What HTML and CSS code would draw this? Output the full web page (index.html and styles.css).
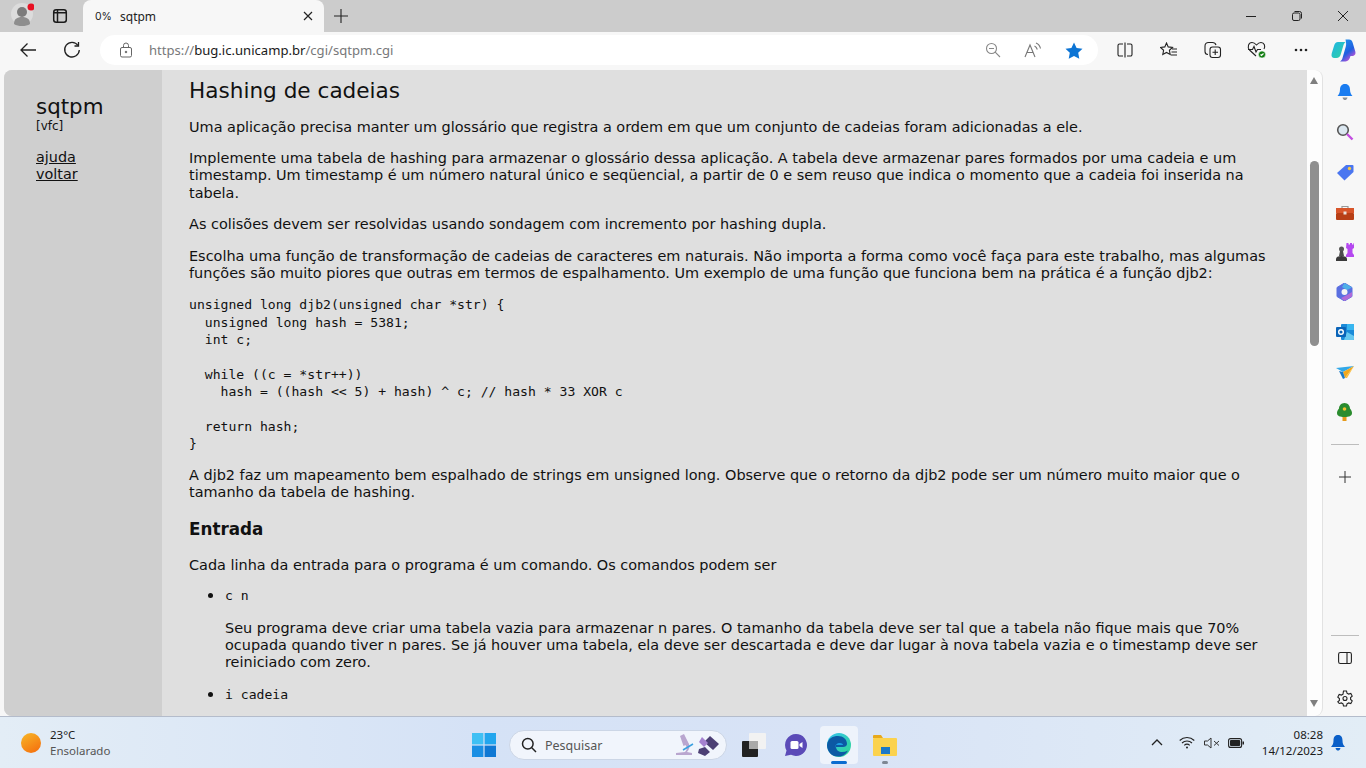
FILE: index.html
```html
<!DOCTYPE html>
<html lang="pt-BR">

<head>
  <meta charset="UTF-8">
  <meta name="viewport" content="width=device-width, initial-scale=1.0">
  <title>0% sqtpm</title>
  <link rel="stylesheet" href="styles.css">
</head>

<body>
  <div class="screen">

    <!-- Tab strip -->
    <div class="tabstrip">
      <div class="profile">
        <svg width="34" height="30" viewBox="0 0 34 30">
          <circle cx="22" cy="15" r="11" fill="#dcdcdc" />
          <circle cx="22" cy="13" r="5" fill="#7c7c7c" />
          <path d="M14 25c0-5 3-7 8-7s8 2 8 7c-2 1.500-5 2-8 2s-6-.5-8-2z" fill="#8e8e8e" />
          <circle cx="31" cy="8" r="3.500" fill="#e81123" />
        </svg>
      </div>
      <svg class="tabs-icon" width="16" height="16" viewBox="0 0 16 16" fill="none" stroke="#1a1a1a" stroke-width="1.500">
        <rect x="1.700" y="1.700" width="12.600" height="12.600" rx="2.500" />
        <path d="M5.500 2v12.300M2 4.800h12" />
      </svg>
      <div class="tab">
        <span class="tab-fav">0%</span>
        <span class="tab-title">sqtpm</span>
        <svg width="12" height="12" viewBox="0 0 12 12" stroke="#222" stroke-width="1.200">
          <path d="M2 2l8 8M10 2l-8 8" />
        </svg>
      </div>
      <svg class="new-tab" width="16" height="16" viewBox="0 0 16 16" stroke="#222" stroke-width="1.100">
        <path d="M8 1v14M1 8h14" />
      </svg>
      <div class="win-buttons">
        <svg width="12" height="12" viewBox="0 0 12 12" stroke="#222" stroke-width="1">
          <path d="M1 6.500h10" />
        </svg>
        <svg width="12" height="12" viewBox="0 0 12 12" fill="none" stroke="#222" stroke-width="1">
          <rect x="1.500" y="3" width="7.500" height="7.500" rx="1.500" />
          <path d="M3.500 1.500h5a2 2 0 0 1 2 2v5" />
        </svg>
        <svg width="12" height="12" viewBox="0 0 12 12" stroke="#222" stroke-width="1">
          <path d="M1 1l10 10M11 1L1 11" />
        </svg>
      </div>
    </div>

    <!-- Address bar -->
    <div class="toolbar">
      <svg class="nav-back" width="18" height="16" viewBox="0 0 18 16" fill="none" stroke="#222" stroke-width="1.300">
        <path d="M17 8H2M8.500 1.500L2 8l6.500 6.500" />
      </svg>
      <svg class="nav-reload" width="18" height="18" viewBox="0 0 18 18" fill="none" stroke="#222" stroke-width="1.300">
        <path d="M15 4.500A7.300 7.300 0 1 0 16.300 9" />
        <path d="M15.500 1v4h-4" />
      </svg>
      <div class="address">
        <svg class="lock" width="14" height="16" viewBox="0 0 14 16" fill="none" stroke="#666" stroke-width="1">
          <rect x="1.500" y="5.500" width="11" height="9.500" rx="1.500" />
          <path d="M4.500 5.500V3.500a2.500 2.500 0 0 1 5 0v2" />
          <circle cx="7" cy="10" r=".8" fill="#666" />
        </svg>
        <span class="url"><span class="url-dim">https://</span>bug.ic.unicamp.br<span class="url-dim">/cgi/sqtpm.cgi</span></span>
        <div class="address-icons">
          <svg width="16" height="16" viewBox="0 0 16 16" fill="none" stroke="#888" stroke-width="1.100">
            <circle cx="6.500" cy="6.500" r="5" />
            <path d="M10.200 10.200L15 15M4 6.500h5" />
          </svg>
          <svg width="18" height="16" viewBox="0 0 18 16" fill="none" stroke="#777" stroke-width="1.100">
            <path d="M1 15L6 3l5 12M3 10.500h6" />
            <path d="M10.500 4c1.500.7 2.300 1.800 2.800 3.500M12 1c2.500 1 4 3 4.500 5.500" />
          </svg>
          <svg width="18" height="17" viewBox="0 0 18 17">
            <path d="M9 .5l2.600 5.400 5.900.8-4.300 4.100 1.100 5.900L9 13.900l-5.300 2.800 1.100-5.900L.5 6.700l5.900-.8z" fill="#0c74d4" />
          </svg>
        </div>
      </div>
      <div class="toolbar-icons">
        <svg width="16" height="16" viewBox="0 0 16 16" fill="none" stroke="#222" stroke-width="1.100">
          <path d="M6 2H2.500A1.500 1.500 0 0 0 1 3.500v9A1.500 1.500 0 0 0 2.500 14H6M10 2h3.500A1.500 1.500 0 0 1 15 3.500v9a1.500 1.500 0 0 1-1.500 1.500H10M8 .5v15" />
        </svg>
        <svg width="18" height="16" viewBox="0 0 18 16" fill="none" stroke="#222" stroke-width="1.100">
          <path d="M6.500 1l1.700 3.900 4.300.5-3.100 2.900.8 4.200-3.700-2.100-3.700 2.100.8-4.200L.5 5.400l4.300-.5zM12 7h5M11.500 10h5.500M11 13h6" />
        </svg>
        <svg width="18" height="18" viewBox="0 0 18 18" fill="none" stroke="#222" stroke-width="1.100">
          <path d="M4 13.500c-2 0-3-1-3-3V5c0-2 1.500-3.500 3.500-3.500h4c2 0 3 1 3.500 2.500" />
          <rect x="6" y="6" width="10.500" height="10.500" rx="2.500" />
          <path d="M11.200 8.500v5.500M8.500 11.200h5.500" />
        </svg>
        <svg width="20" height="18" viewBox="0 0 20 18" fill="none" stroke="#222" stroke-width="1.100">
          <path d="M9 15L2.500 9C0 6 1.500 1.500 5 1.500c2 0 3.200 1 4.500 2.500 1.300-1.500 2.500-2.500 4.500-2.500 3.500 0 4.500 4 3 6.500" />
          <path d="M1 8.500h4.500l1.500-3 2 5.500 1.500-2.500H14" />
          <circle cx="15" cy="13.500" r="3.600" fill="#107c10" stroke="#fff" stroke-width=".6" />
          <path d="M13.500 13.500l1 1 2-2" stroke="#fff" />
        </svg>
        <svg width="14" height="4" viewBox="0 0 14 4" fill="#222">
          <circle cx="2" cy="2" r="1.300" />
          <circle cx="7" cy="2" r="1.300" />
          <circle cx="12" cy="2" r="1.300" />
        </svg>
      </div>
      <svg class="copilot" width="25" height="23" viewBox="0 0 25 23">
        <defs>
          <linearGradient id="copA" x1="0" y1="0" x2="1" y2="1">
            <stop offset="0" stop-color="#1fb4e6" />
            <stop offset="1" stop-color="#30d2a0" />
          </linearGradient>
          <linearGradient id="copB" x1="0" y1="0" x2=".6" y2="1">
            <stop offset="0" stop-color="#1d9af0" />
            <stop offset=".65" stop-color="#1f5fe0" />
            <stop offset="1" stop-color="#c452d8" />
          </linearGradient>
        </defs>
        <path d="M7 3h7.500c-1.200 1-1.800 2.200-2.300 4l-2.500 8.500c-.6 2-2 3.500-4.200 3.500H3.500C1 19 0 17 .7 14.500L3 7c.7-2.500 2-4 4-4z" fill="url(#copA)" />
        <path d="M14.500 .5h3.500c2 0 3 1 3.600 3l2.700 9c.7 2.800-.8 4.500-3.300 4.500h-1.500c-.8 3-2.500 5.500-5 5.500H9c1.500-1 2.300-2.500 2.800-4.500l3-10.500c.5-2 .5-2.500-.3-7z" fill="url(#copB)" />
      </svg>
    </div>

    <!-- Page, scrollbar, edge sidebar -->
    <div class="body-row">
      <div class="viewport">
        <aside class="side">
          <div class="side-title">sqtpm</div>
          <div class="side-user">[vfc]</div>
          <a class="side-link" href="#">ajuda</a>
          <a class="side-link" href="#">voltar</a>
        </aside>
        <main class="content">
          <h1>Hashing de cadeias</h1>
          <p>Uma aplicação precisa manter um glossário que registra a ordem em que um conjunto de cadeias foram adicionadas a ele.</p>
          <p>Implemente uma tabela de hashing para armazenar o glossário dessa aplicação. A tabela deve armazenar pares formados por uma cadeia e um timestamp. Um timestamp é um número natural único e seqüencial, a partir de 0 e sem reuso que indica o momento que a cadeia foi inserida na tabela.</p>
          <p>As colisões devem ser resolvidas usando sondagem com incremento por hashing dupla.</p>
          <p>Escolha uma função de transformação de cadeias de caracteres em naturais. Não importa a forma como você faça para este trabalho, mas algumas funções são muito piores que outras em termos de espalhamento. Um exemplo de uma função que funciona bem na prática é a função djb2:</p>
          <pre>unsigned long djb2(unsigned char *str) {
  unsigned long hash = 5381;
  int c;

  while ((c = *str++))
    hash = ((hash &lt;&lt; 5) + hash) ^ c; // hash * 33 XOR c

  return hash;
}</pre>
          <p>A djb2 faz um mapeamento bem espalhado de strings em unsigned long. Observe que o retorno da djb2 pode ser um número muito maior que o tamanho da tabela de hashing.</p>
          <h2>Entrada</h2>
          <p>Cada linha da entrada para o programa é um comando. Os comandos podem ser</p>
          <ul>
            <li>
              <code>c n</code>
              <p>Seu programa deve criar uma tabela vazia para armazenar n pares. O tamanho da tabela deve ser tal que a tabela não fique mais que 70% ocupada quando tiver n pares. Se já houver uma tabela, ela deve ser descartada e deve dar lugar à nova tabela vazia e o timestamp deve ser reiniciado com zero.</p>
            </li>
            <li>
              <code>i cadeia</code>
            </li>
          </ul>
        </main>
      </div>
      <div class="scrollbar">
        <span class="arrow-up"></span>
        <span class="thumb"></span>
        <span class="arrow-down"></span>
      </div>
      <div class="edge">
        <div class="edge-item">
          <svg width="16" height="18" viewBox="0 0 16 18">
            <path d="M8 1c3.500 0 5 2.500 5 5.500 0 3 1 5 2.500 6.500H.5C2 11.500 3 9.500 3 6.500 3 3.500 4.500 1 8 1z" fill="#1a7cf0" />
            <path d="M5.500 14.500h5C10 16.500 9 17 8 17s-2-.5-2.500-2.500z" fill="#8a8f98" />
          </svg>
        </div>
        <div class="edge-item">
          <svg width="18" height="18" viewBox="0 0 18 18" fill="none">
            <circle cx="7" cy="7" r="5.300" fill="#dbe7f0" stroke="#555" stroke-width="1.600" />
            <path d="M11 11l5.500 5.500" stroke="#c24de0" stroke-width="2.400" />
          </svg>
        </div>
        <div class="edge-item">
          <svg width="18" height="17" viewBox="0 0 18 17">
            <path d="M10 1h6.500A1 1 0 0 1 17.500 2v6L8.500 16.500 1 9z" fill="#4a76f0" />
            <circle cx="13.500" cy="4.500" r="1.700" fill="#f6c644" />
          </svg>
        </div>
        <div class="edge-item">
          <svg width="18" height="15" viewBox="0 0 18 15">
            <path d="M6 3V1.500h6V3" fill="none" stroke="#9a9a9a" stroke-width="1.200" />
            <rect y="3" width="18" height="5" fill="#d8552a" />
            <rect y="8" width="18" height="7" rx="1" fill="#b83f16" />
            <rect x="7.500" y="6.500" width="3" height="3" fill="#e9e2dc" />
          </svg>
        </div>
        <div class="edge-item">
          <svg width="18" height="18" viewBox="0 0 18 18">
            <path d="M10.500 0h2v1.500h1.500V0h2v1.500h1.500V0H18v5l-1.500 1v4l1.500 2v2H10v-2l1.500-2V6L10 5z" fill="#b548f0" />
            <circle cx="5.500" cy="6" r="2.500" fill="#555" />
            <path d="M4 8h3l1 5H3z" fill="#4d4d4d" />
            <path d="M0 18v-2c0-2 2-3 5.500-3s5.500 1 5.500 3v2z" fill="#3a3a3a" />
          </svg>
        </div>
        <div class="edge-item">
          <svg width="17" height="18" viewBox="0 0 17 18">
            <path d="M8.500 0L16 4.500v9L8.500 18 1 13.500v-9z" fill="#5a6fe0" stroke="#5a6fe0" stroke-linejoin="round" />
            <path d="M8.500 0L16 4.500 11 7 6 4z" fill="#4fb0e8" />
            <path d="M16 9v4.500L8.500 18 5 15l6-3z" fill="#b06ad8" />
            <circle cx="8.500" cy="9" r="3" fill="#f4f4f4" />
          </svg>
        </div>
        <div class="edge-item">
          <svg width="18" height="16" viewBox="0 0 18 16">
            <rect x="5" width="13" height="16" rx="1" fill="#1a8ad8" />
            <path d="M11 0h6a1 1 0 0 1 1 1v5h-7z" fill="#38b6f0" />
            <path d="M11 8l7 4v3a1 1 0 0 1-1 1h-9z" fill="#66c8f0" />
            <rect y="3" width="10" height="10" rx="1" fill="#0a64b8" />
            <circle cx="5" cy="8" r="2.300" fill="none" stroke="#fff" stroke-width="1.400" />
          </svg>
        </div>
        <div class="edge-item">
          <svg width="18" height="13" viewBox="0 0 18 13">
            <path d="M0 2l18-2-11 6z" fill="#32a8e8" />
            <path d="M18 0L7 6l2 6z" fill="#f2a81d" />
            <path d="M18 0L9 12l2 0z" fill="#fbbc3a" />
            <path d="M3 5l4 1 2 6-2 1z" fill="#1a7ac8" />
          </svg>
        </div>
        <div class="edge-item">
          <svg width="15" height="18" viewBox="0 0 15 18">
            <rect x="5.500" y="13" width="4" height="5" fill="#e69a1a" />
            <path d="M7.500 0C11 0 13 3 13 5.500 14.500 7 15 9 15 10c0 3-3 4-7.500 4S0 13 0 10c0-1 .5-3 2-4.500C2 3 4 0 7.500 0z" fill="#2a8c2e" />
            <circle cx="7.500" cy="6" r="1.800" fill="#f2c12e" />
          </svg>
        </div>
        <span class="edge-rule edge-rule-top"></span>
        <div class="edge-item">
          <svg width="14" height="14" viewBox="0 0 14 14" stroke="#333" stroke-width="1">
            <path d="M7 1v12M1 7h12" />
          </svg>
        </div>
        <span class="edge-spacer"></span>
        <span class="edge-rule"></span>
        <div class="edge-item edge-item-low">
          <svg width="14" height="14" viewBox="0 0 14 14" fill="none" stroke="#222" stroke-width="1.100">
            <rect x=".6" y="1.500" width="12.800" height="11" rx="1.800" />
            <path d="M9 1.500v11" />
          </svg>
        </div>
        <div class="edge-item edge-item-low">
          <svg width="16" height="17" viewBox="0 0 16 17" fill="none" stroke="#222" stroke-width="1.100">
            <path d="M6.500 1h3l.5 2.200 1.600.9 2.200-.6 1.400 2.600-1.600 1.500v1.800l1.600 1.500-1.400 2.600-2.200-.6-1.600.9-.5 2.200h-3l-.5-2.200-1.600-.9-2.200.6L.8 11.900l1.600-1.500V8.600L.8 7.100l1.400-2.600 2.200.6L6 4.200z" />
            <circle cx="8" cy="8.500" r="2" />
          </svg>
        </div>
      </div>
    </div>

    <!-- Windows taskbar -->
    <footer class="taskbar">
      <div class="weather">
        <span class="sun"></span>
        <div class="weather-text">
          <span class="temp">23°C</span>
          <span class="cond">Ensolarado</span>
        </div>
      </div>
      <div class="task-center">
        <svg class="win-logo" width="24" height="24" viewBox="0 0 24 24">
          <rect width="11.400" height="11.400" x="0" y="0" fill="#3fc0f4" />
          <rect width="11.400" height="11.400" x="12.600" y="0" fill="#22a6ee" />
          <rect width="11.400" height="11.400" x="0" y="12.600" fill="#1a8fe4" />
          <rect width="11.400" height="11.400" x="12.600" y="12.600" fill="#0f78d4" />
        </svg>
        <div class="search">
          <svg width="16" height="16" viewBox="0 0 16 16" fill="none" stroke="#222" stroke-width="1.500">
            <circle cx="6.800" cy="6.800" r="5.300" />
            <path d="M10.800 10.800L15 15" />
          </svg>
          <span class="search-label">Pesquisar</span>
          <svg class="search-art" width="46" height="24" viewBox="0 0 46 24">
            <path d="M6 3l4-2 5 10c1 3 0 6-2 8l5 1v2H2v-2l9-1c1.500-1.500 2-3 1.500-5l-1-2-2 1z" fill="#b9a6cf" />
            <path d="M9 17l10-6" stroke="#3aa0e0" stroke-width="1.500" />
            <path d="M30 9l6-6 9 8-6 6zM25 16l6-2 5 5-5 4-7-3z" fill="#4c3f74" />
            <path d="M28 4l6 6-4 4-5-5z" fill="#a582cf" />
          </svg>
        </div>
        <svg class="task-icon" width="24" height="24" viewBox="0 0 24 24">
          <rect x="7" y="0" width="17" height="16" rx="1" fill="#f2f2f2" />
          <rect x="0" y="8" width="16" height="16" rx="1" fill="#222" />
          <rect x="7" y="8" width="9" height="8" fill="#a9a9a9" />
        </svg>
        <svg class="task-icon" width="24" height="24" viewBox="0 0 24 24">
          <path d="M12 1a11 11 0 1 1-5 20.800L1 23l1.500-5.500A11 11 0 0 1 12 1z" fill="#5b4bb8" />
          <rect x="6.500" y="8" width="8" height="8" rx="1.500" fill="#fff" />
          <path d="M15.500 11l3-2v6l-3-2z" fill="#fff" />
        </svg>
        <div class="task-active">
          <svg width="24" height="24" viewBox="0 0 24 24">
            <defs>
              <linearGradient id="edgeA" x1="0" y1="0" x2="1" y2="1">
                <stop offset="0" stop-color="#35c1f1" />
                <stop offset="1" stop-color="#2fd88e" />
              </linearGradient>
            </defs>
            <circle cx="12" cy="12" r="12" fill="url(#edgeA)" />
            <path d="M0 12C1 5 6 3 11 3c5 0 9 3 9 8 0 2-2 3-4 3H9c0 3 3 5 6 5 2 0 4-.5 6-1.500-2 3.500-5 6-9 6C5 24 0 19 0 12z" fill="#0c59a4" />
            <path d="M8 15c0-3 2-5 5-5 2 0 3 1 3 2H9z" fill="#1b9de2" />
          </svg>
          <span class="active-bar"></span>
        </div>
        <div class="task-folder">
          <svg width="24" height="22" viewBox="0 0 24 22">
            <path d="M0 2a1 1 0 0 1 1-1h7l2 3H0z" fill="#e8a91c" />
            <rect y="4" width="24" height="18" rx="1" fill="#fbd24e" />
            <rect x="8" y="13" width="9" height="7" fill="#1b78c8" />
          </svg>
          <span class="open-dot"></span>
        </div>
      </div>
      <div class="tray">
        <svg width="12" height="7" viewBox="0 0 12 7" fill="none" stroke="#222" stroke-width="1.300">
          <path d="M1 6l5-5 5 5" />
        </svg>
        <svg class="tray-wifi" width="16" height="13" viewBox="0 0 16 13" fill="none" stroke="#222" stroke-width="1.100">
          <path d="M.7 4.500a10.500 10.500 0 0 1 14.600 0M3 7a7.200 7.200 0 0 1 10 0M5.300 9.300a3.800 3.800 0 0 1 5.400 0" />
          <circle cx="8" cy="11.500" r="1" fill="#222" stroke="none" />
        </svg>
        <svg width="16" height="12" viewBox="0 0 16 12" fill="none" stroke="#333" stroke-width="1">
          <path d="M.5 4v4h3L7 11V1L3.500 4zM10 4l5 4.500M15 4l-5 4.500" />
        </svg>
        <svg class="tray-battery" width="16" height="10" viewBox="0 0 16 10">
          <rect x=".6" y=".6" width="13" height="8.800" rx="2" fill="none" stroke="#222" stroke-width="1.100" />
          <rect x="2" y="2" width="10.200" height="6" rx="1" fill="#222" />
          <rect x="14.500" y="3.500" width="1.500" height="3" fill="#222" />
        </svg>
        <div class="clock">
          <span>08:28</span>
          <span>14/12/2023</span>
        </div>
        <svg width="14" height="16" viewBox="0 0 14 16">
          <path d="M7 0c3.500 0 4.500 2.500 4.500 5.500 0 3 .8 4.500 2.500 6.500H0c1.700-2 2.500-3.500 2.500-6.500C2.500 2.500 3.500 0 7 0z" fill="#0a5fc8" />
          <path d="M4.500 13h5C9 15 8 15.500 7 15.500S5 15 4.500 13z" fill="#0a5fc8" />
        </svg>
      </div>
    </footer>
  </div>
</body>

</html>
```

FILE: styles.css
```css
/* General */
* {
  box-sizing: border-box;
}

body {
  margin: 0;
  overflow: hidden;
  font-family: 'Noto Sans', sans-serif;
}

.screen {
  width: 1366px;
  height: 768px;
  display: flex;
  flex-direction: column;
  overflow: hidden;
  background: #f7f7f7;
}

svg {
  flex: none;
}

/* Tab strip */
.tabstrip {
  height: 32px;
  flex: none;
  display: flex;
  align-items: center;
  background: #cccccc;
}

.profile {
  width: 36px;
  margin-right: 16px;
}

.tabs-icon {
  margin-right: 15px;
}

.tab {
  width: 241px;
  height: 32px;
  display: flex;
  align-items: center;
  padding: 0 10px 0 12px;
  background: #f7f7f7;
  border-radius: 8px 8px 0 0;
  font-family: 'Inter', sans-serif;
  font-size: 12px;
  color: #222;
}

.tab-fav {
  width: 25px;
  font-size: 10.500px;
}

.tab-title {
  flex: 1;
  font-family: 'Noto Sans', sans-serif;
}

.new-tab {
  margin-left: 9px;
}

.win-buttons {
  margin-left: auto;
  display: flex;
  gap: 34px;
  padding-right: 17px;
}

/* Address bar */
.toolbar {
  height: 38px;
  flex: none;
  display: flex;
  align-items: center;
  padding-bottom: 2px;
  background: #f7f7f7;
}

.nav-back {
  margin-left: 19px;
}

.nav-reload {
  margin-left: 26px;
}

.address {
  width: 998px;
  height: 30px;
  margin-left: 19px;
  padding: 0 15px 0 19px;
  display: flex;
  align-items: center;
  background: #ffffff;
  border-radius: 15px;
}

.url {
  margin-left: 16px;
  font-size: 13.100px;
  color: #1a1a1a;
}

.url-dim {
  color: #77787a;
}

.address-icons {
  margin-left: auto;
  display: flex;
  align-items: center;
  gap: 23px;
}

.toolbar-icons {
  margin-left: 5px;
  display: grid;
  grid-auto-flow: column;
  grid-auto-columns: 44px;
  justify-items: center;
  align-items: center;
}

.copilot {
  margin-left: 8px;
}

/* Page area */
.body-row {
  height: 646px;
  flex: none;
  display: flex;
  padding-left: 4px;
  background: #f7f7f7;
}

.viewport {
  width: 1303px;
  display: flex;
  overflow: hidden;
  background: #dfdfdf;
  border-radius: 8px 0 0 8px;
}

.side {
  width: 158px;
  flex: none;
  padding: 24px 32px;
  background: #cfcfcf;
  font-family: 'DejaVu Sans', sans-serif;
  color: #111;
}

.side-title {
  font-size: 21.400px;
  line-height: 25px;
}

.side-user {
  margin-bottom: 16px;
  font-size: 12px;
  line-height: 14px;
}

.side-link {
  display: block;
  font-size: 14.400px;
  line-height: 17px;
  color: #111;
}

.content {
  flex: 1;
  padding: 0 40px 0 27px;
  overflow: hidden;
  font-family: 'DejaVu Sans', sans-serif;
  font-size: 14.440px;
  line-height: 17.300px;
  color: #111;
}

.content h1 {
  margin: 8px 0 14.500px;
  font-size: 21.600px;
  font-weight: normal;
  line-height: 26px;
}

.content h2 {
  margin: 17px 0 18px;
  font-size: 16.800px;
  font-weight: bold;
  line-height: 20px;
}

.content p {
  margin: 14.400px 0;
}

.content pre,
.content code {
  font-family: 'DejaVu Sans Mono', monospace;
  font-size: 13.100px;
}

/* negative top margins: they collapse with the 14.4px under the paragraph */
.content pre {
  margin: -1px 0 14.400px;
  line-height: 17.400px;
}

.content ul {
  margin: -2px 0 12px;
  padding-left: 36px;
}

.content li {
  margin-bottom: 13px;
}

.content li::marker {
  font-size: 17px;
}

.content li p {
  margin: 15px 0 13px;
}

/* Scrollbar */
.scrollbar {
  width: 16px;
  flex: none;
  position: relative;
  background: #fdfdfd;
  border-right: 1px solid #e2e2e2;
  border-radius: 0 8px 8px 0;
}

.thumb {
  position: absolute;
  left: 3px;
  top: 91px;
  width: 9px;
  height: 185px;
  background: #8f8f8f;
  border-radius: 5px;
}

.arrow-up,
.arrow-down {
  position: absolute;
  left: 3px;
  width: 0;
  height: 0;
  border-left: 4.500px solid transparent;
  border-right: 4.500px solid transparent;
}

.arrow-up {
  top: 7px;
  border-bottom: 7px solid #7f7f7f;
}

.arrow-down {
  bottom: 9px;
  border-top: 7px solid #7f7f7f;
}

/* Edge sidebar */
.edge {
  flex: 1;
  display: flex;
  flex-direction: column;
  align-items: center;
  padding-top: 2px;
}

.edge-item {
  height: 40px;
  flex: none;
  display: flex;
  align-items: center;
  justify-content: center;
}

.edge-item-low {
  height: 36px;
  margin-top: 4px;
}

.edge-rule {
  width: 28px;
  height: 1px;
  flex: none;
  background: #bdbdbd;
}

.edge-rule-top {
  margin: 12px 0;
}

.edge-spacer {
  flex: 1;
}

/* Taskbar */
.taskbar {
  height: 52px;
  flex: none;
  position: relative;
  display: flex;
  align-items: center;
  border-top: 1px solid #b4bccb;
  background: linear-gradient(90deg, #e3edf6, #d5e2f6 35%, #d8e3f6 60%, #e2edf6);
}

.weather {
  display: flex;
  align-items: center;
  padding-left: 21px;
}

.sun {
  width: 20px;
  height: 20px;
  border-radius: 50%;
  background: linear-gradient(150deg, #f7b828, #f56a0c);
}

.weather-text {
  display: flex;
  flex-direction: column;
  margin-left: 9px;
  font-size: 11.500px;
  line-height: 16px;
}

.temp {
  color: #1a1a1a;
}

.cond {
  color: #555;
}

.task-center {
  position: absolute;
  left: 472px;
  top: 4px;
  height: 48px;
  display: flex;
  align-items: center;
}

.search {
  width: 218px;
  height: 30px;
  margin-left: 13px;
  padding: 0 6px 0 11px;
  display: flex;
  align-items: center;
  background: #f1f5fc;
  border: 1px solid #ccd6e6;
  border-radius: 15px;
}

.search-label {
  margin-left: 8px;
  font-size: 12.500px;
  color: #555;
}

.search-art {
  margin-left: auto;
}

.task-icon {
  margin-left: 15px;
}

.task-icon + .task-icon {
  margin-left: 18px;
}

.task-active {
  width: 38px;
  height: 38px;
  margin-left: 12px;
  position: relative;
  display: flex;
  align-items: center;
  justify-content: center;
  background: #eef3fb;
  border-radius: 4px;
}

.active-bar {
  position: absolute;
  left: 11px;
  bottom: 0;
  width: 16px;
  height: 3px;
  border-radius: 2px;
  background: #0a6cd0;
}

.task-folder {
  margin-left: 15px;
  position: relative;
  width: 24px;
  height: 38px;
  display: flex;
  align-items: center;
}

.open-dot {
  position: absolute;
  left: 9px;
  bottom: 0;
  width: 6px;
  height: 3px;
  border-radius: 2px;
  background: #7d8794;
}

.tray {
  margin-left: auto;
  display: flex;
  align-items: center;
  padding-right: 21px;
  color: #1a1a1a;
}

.tray svg + svg {
  margin-left: 9px;
}

.tray svg.tray-wifi {
  margin-left: 16px;
}

.tray svg.tray-battery {
  margin-left: 8px;
}

.clock {
  margin: 0 8px 0 18px;
  display: flex;
  flex-direction: column;
  align-items: flex-end;
  font-size: 11.500px;
  line-height: 16px;
}
```
